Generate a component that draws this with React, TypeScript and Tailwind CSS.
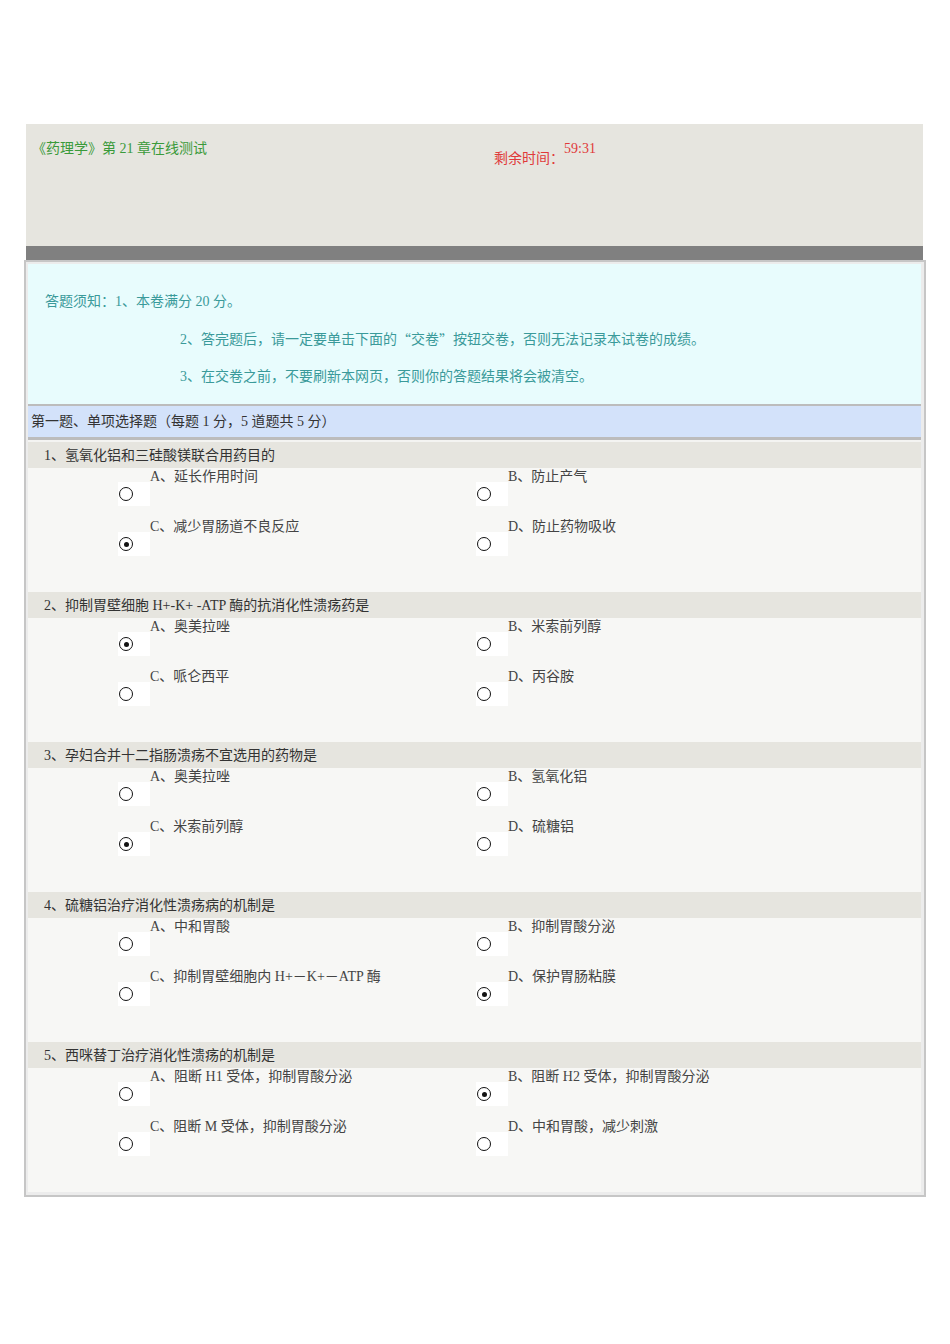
const font = { fontFamily: '"Liberation Serif", "Noto Sans CJK SC", serif' };
const cjk = { fontFamily: '"Noto Sans CJK SC", sans-serif' };

type Option = { label: string; checked?: boolean };
type Question = { title: string; options: Option[] };

const questions: Question[] = [
  {
    title: "1、氢氧化铝和三硅酸镁联合用药目的",
    options: [
      { label: "A、延长作用时间" },
      { label: "B、防止产气" },
      { label: "C、减少胃肠道不良反应", checked: true },
      { label: "D、防止药物吸收" },
    ],
  },
  {
    title: "2、抑制胃壁细胞 H+-K+ -ATP 酶的抗消化性溃疡药是",
    options: [
      { label: "A、奥美拉唑", checked: true },
      { label: "B、米索前列醇" },
      { label: "C、哌仑西平" },
      { label: "D、丙谷胺" },
    ],
  },
  {
    title: "3、孕妇合并十二指肠溃疡不宜选用的药物是",
    options: [
      { label: "A、奥美拉唑" },
      { label: "B、氢氧化铝" },
      { label: "C、米索前列醇", checked: true },
      { label: "D、硫糖铝" },
    ],
  },
  {
    title: "4、硫糖铝治疗消化性溃疡病的机制是",
    options: [
      { label: "A、中和胃酸" },
      { label: "B、抑制胃酸分泌" },
      { label: "C、抑制胃壁细胞内 H+－K+－ATP 酶" },
      { label: "D、保护胃肠粘膜", checked: true },
    ],
  },
  {
    title: "5、西咪替丁治疗消化性溃疡的机制是",
    options: [
      { label: "A、阻断 H1 受体，抑制胃酸分泌" },
      { label: "B、阻断 H2 受体，抑制胃酸分泌", checked: true },
      { label: "C、阻断 M 受体，抑制胃酸分泌" },
      { label: "D、中和胃酸，减少刺激" },
    ],
  },
];

const Radio = ({ checked }: { checked?: boolean }) => (
  <div className="w-[32px] h-[24px] bg-white mt-[14px] shrink-0 flex items-center pl-[1px]">
    <div className="w-[14px] h-[14px] rounded-full border-[1.5px] border-[#111] flex items-center justify-center">
      {checked && <div className="w-[5px] h-[5px] rounded-full bg-[#111]" />}
    </div>
  </div>
);

const OptionCell = ({ option }: { option: Option }) => (
  <div className="flex h-[50px]">
    <Radio checked={option.checked} />
    <div className="text-[14px] leading-[16px] text-[#444] pt-[1px] whitespace-nowrap">{option.label}</div>
  </div>
);

const QuestionBlock = ({ q }: { q: Question }) => (
  <div>
    <div className="h-[26px] bg-[#e6e5df] pl-[16px] pt-[6px] text-[14px] leading-[16px] text-[#333] whitespace-nowrap">{q.title}</div>
    <div className="h-[124px] bg-[#f7f7f5] grid grid-cols-[90px_358px_1fr]">
      <div />
      <div>
        <OptionCell option={q.options[0]} />
        <OptionCell option={q.options[2]} />
      </div>
      <div>
        <OptionCell option={q.options[1]} />
        <OptionCell option={q.options[3]} />
      </div>
    </div>
  </div>
);

export default function App() {
  return (
    <div className="min-h-[1344px] bg-white pt-[124px]" style={font}>
      {/* header */}
      <div className="ml-[26px] w-[897px]">
        <div className="h-[122px] bg-[#e6e5df] flex">
          <div className="w-[462px] pl-[6px] pt-[17px] text-[14px] leading-[16px] text-[#3a9a3a] whitespace-nowrap">
            《药理学》第 21 章在线测试
          </div>
          <div className="pl-[6px] pt-[17px] flex items-start text-[14px] leading-[16px] text-[#e03a3a] whitespace-nowrap">
            <span className="mt-[10px]">剩余时间：</span>
            <span>59:31</span>
          </div>
        </div>
        <div className="h-[14px] bg-[#808080]" />
      </div>

      {/* paper */}
      <div className="ml-[24px] w-[902px] border-2 border-[#c6c6c6] p-[2px] pr-[3px] pb-[3px] bg-[#ececec]">
        <div className="h-[140px] bg-[#e8fcfd] pt-[30px] flex flex-col gap-[21.5px] text-[14px] leading-[16px] text-[#3a9a9a] whitespace-nowrap">
          <div className="pl-[17px] h-[16px]">答题须知：1、本卷满分 20 分。</div>
          <div className="pl-[152px] h-[16px] flex items-start">
            <span>2、答完题后，请一定要单击下面的</span>
            <span style={cjk} className="leading-[15px]">“</span>
            <span>交卷</span>
            <span style={cjk} className="leading-[15px]">”</span>
            <span>按钮交卷，否则无法记录本试卷的成绩。</span>
          </div>
          <div className="pl-[152px] h-[16px]">3、在交卷之前，不要刷新本网页，否则你的答题结果将会被清空。</div>
        </div>
        <div className="border-t-2 border-b-[3px] border-[#bcbcbc] h-[36px] bg-[#d3e2fa] pl-[3px] flex items-center text-[14px] text-[#333] whitespace-nowrap">
          第一题、单项选择题（每题 1 分，5 道题共 5 分）
        </div>
        <div className="h-[2px] bg-[#f4f4f2]" />
        {questions.map((q, i) => (
          <QuestionBlock key={i} q={q} />
        ))}
      </div>
    </div>
  );
}
